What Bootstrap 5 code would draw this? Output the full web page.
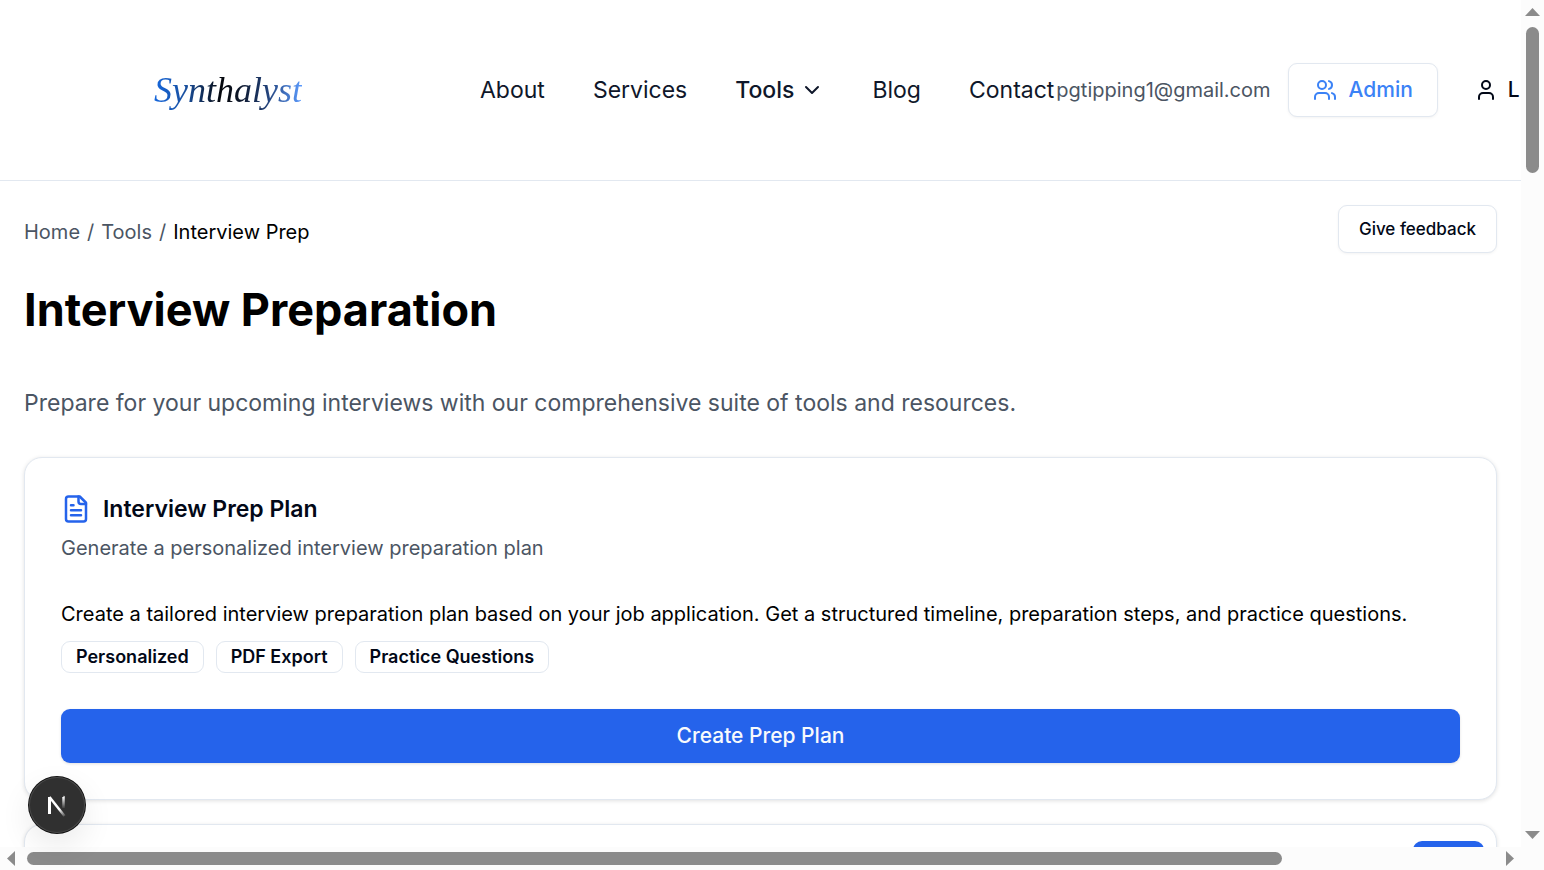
<!DOCTYPE html>
<html lang="en">
<head>
<meta charset="utf-8">
<meta name="viewport" content="width=device-width, initial-scale=1">
<title>Interview Preparation - Synthalyst</title>
<link href="https://cdn.jsdelivr.net/npm/bootstrap@5.3.0/dist/css/bootstrap.min.css" rel="stylesheet">
<style>
  :root { --ink: #020817; --nav-ink: #0f172a; --muted-ink: #4b5563; --line: #e2e8f0; --brand: #2563eb; --thumb: #8b8b8b; }
  body { font-family: Inter, "Liberation Sans", sans-serif; font-size: 20px; line-height: 30px; color: #000; background: #fff; }
  a { text-decoration: none; }
  svg { fill: none; stroke: currentColor; stroke-width: 2; stroke-linecap: round; stroke-linejoin: round; flex: none; }
  .frame { display: grid; grid-template: minmax(0, 1fr) 23px / minmax(0, 1fr) 23px; }

  .site-header { height: 181px; border-bottom: 1px solid var(--line); white-space: nowrap; }
  .brand-cell { width: 480px; padding-left: 154px; flex: none; }
  .brand { font: italic 36px/60px "Z003", "URW Chancery L", "Liberation Serif", serif; color: transparent; background: linear-gradient(90deg, #1567dd 0%, #1a4f9c 22%, #05070c 45%, #0b1220 55%, #1f3c70 75%, #5b9bff 100%); -webkit-background-clip: text; background-clip: text; }
  .site-nav { gap: 48px; font-size: 23px; flex: none; padding-right: 2px; }
  .site-nav a, .site-nav button { color: var(--nav-ink); }
  .tools-btn { font-weight: 500; gap: 6px; }
  .email { color: var(--muted-ink); margin-right: 17px; }
  .ui-btn { height: 54px; border: 1px solid var(--line); border-radius: 9px; padding: 0 24px; gap: 12px; font-size: 21px; font-weight: 500; background: #fff; box-shadow: 0 1px 3px rgba(0,0,0,.05); flex: none; }
  .ui-btn.admin { color: #3b82f6; }
  .ui-btn.plain { border-color: transparent; box-shadow: none; color: var(--ink); margin-left: 11px; gap: 10px; }
  .ui-btn.feedback { height: 48px; padding: 0 20px; font-size: 17px; color: var(--ink); }

  .crumbs { gap: 7px; color: var(--muted-ink); margin-bottom: 6px; }
  .crumbs a { color: var(--muted-ink); }
  .page-title { font-size: 45px; line-height: 54px; font-weight: 700; margin: 30px 0 48px; }
  .intro { font-size: 23px; line-height: 36px; color: var(--muted-ink); margin-bottom: 36px; }
  .tool-card { border: 1px solid var(--line); border-radius: 18px; padding: 36px; margin-bottom: 24px; background: #fff; box-shadow: 0 1px 4px rgba(0,0,0,.12); }
  .tool-card.next { padding: 16px 12px; height: 200px; }
  .tool-title { font-size: 23px; line-height: 30px; font-weight: 600; color: var(--ink); gap: 12px; margin-bottom: 9px; }
  .tool-title svg { color: var(--brand); }
  .tool-sub { color: var(--muted-ink); margin-bottom: 36px; }
  .tags { gap: 12px; margin: 12px 0 36px; }
  .tag { height: 32px; border: 1px solid var(--line); border-radius: 9px; padding: 0 14px; font-size: 18px; font-weight: 600; color: var(--ink); }
  .cta { height: 54px; border: 0; border-radius: 9px; background: var(--brand); color: #f8fafc; font-size: 21px; font-weight: 500; box-shadow: 0 1px 3px rgba(0,0,0,.12); }
  .pill { width: 71px; height: 30px; background: var(--brand); border-radius: 9px; }

  .scroll { background: #fcfcfc; }
  .scroll svg { fill: var(--thumb); stroke: none; }
  .scroll-y { padding: 8px 0; }
  .scroll-x { padding: 0 7px; }
  .scroll i { background: var(--thumb); border-radius: 7px; }
  .scroll-y i { width: 13px; height: 17.6%; margin-top: 11px; }
  .scroll-x i { height: 13px; width: 83.3%; margin-left: 12px; }

  .dev-badge { position: absolute; left: 29px; bottom: 37px; width: 56px; height: 56px; border: 0; border-radius: 50%; background: #303030; color: #fff; box-shadow: 0 0 0 1px #111, inset 0 0 0 1px #484848, 0 12px 32px rgba(0,0,0,.09); }
</style>
</head>
<body>
<div class="frame vh-100 position-relative overflow-hidden">
  <div class="overflow-hidden">
    <header class="site-header d-flex align-items-center">
      <div class="brand-cell"><a class="brand d-inline-block" href="#">Synthalyst</a></div>
      <nav class="site-nav d-flex align-items-center" aria-label="Main">
        <a href="#">About</a>
        <a href="#">Services</a>
        <button type="button" class="tools-btn border-0 bg-transparent p-0 d-flex align-items-center">Tools
          <svg width="24" height="24" viewBox="0 0 24 24" aria-hidden="true"><path d="m6 9 6 6 6-6"/></svg>
        </button>
        <a href="#">Blog</a>
        <a href="#">Contact</a>
      </nav>
      <span class="email">pgtipping1@gmail.com</span>
      <button type="button" class="ui-btn admin d-flex align-items-center">
        <svg width="24" height="24" viewBox="0 0 24 24" aria-hidden="true"><path d="M16 21v-2a4 4 0 0 0-4-4H6a4 4 0 0 0-4 4v2"/><circle cx="9" cy="7" r="4"/><path d="M22 21v-2a4 4 0 0 0-3-3.87M16 3.13a4 4 0 0 1 0 7.75"/></svg>
        Admin
      </button>
      <button type="button" class="ui-btn plain d-flex align-items-center" aria-label="Logout">
        <svg width="24" height="24" viewBox="0 0 24 24" aria-hidden="true"><path d="M19 21v-2a4 4 0 0 0-4-4H9a4 4 0 0 0-4 4v2"/><circle cx="12" cy="7" r="4"/></svg>
        L
      </button>
    </header>

    <main class="p-4">
      <div class="d-flex justify-content-between align-items-end">
        <nav class="crumbs d-flex" aria-label="Breadcrumb">
          <a href="#">Home</a><span>/</span><a href="#">Tools</a><span>/</span><span class="text-black">Interview Prep</span>
        </nav>
        <button type="button" class="ui-btn feedback">Give feedback</button>
      </div>
      <h1 class="page-title">Interview Preparation</h1>
      <p class="intro">Prepare for your upcoming interviews with our comprehensive suite of tools and resources.</p>

      <section class="tool-card">
        <h2 class="tool-title d-flex align-items-center">
          <svg width="30" height="30" viewBox="0 0 24 24" aria-hidden="true"><path d="M15 2H6a2 2 0 0 0-2 2v16a2 2 0 0 0 2 2h12a2 2 0 0 0 2-2V7Z"/><path d="M14 2v4a2 2 0 0 0 2 2h4M10 9H8M16 13H8M16 17H8"/></svg>
          Interview Prep Plan
        </h2>
        <p class="tool-sub">Generate a personalized interview preparation plan</p>
        <p class="mb-0">Create a tailored interview preparation plan based on your job application. Get a structured timeline, preparation steps, and practice questions.</p>
        <div class="tags d-flex">
          <span class="tag d-flex align-items-center">Personalized</span>
          <span class="tag d-flex align-items-center">PDF Export</span>
          <span class="tag d-flex align-items-center">Practice Questions</span>
        </div>
        <button type="button" class="cta w-100">Create Prep Plan</button>
      </section>

      <section class="tool-card next d-flex justify-content-end">
        <span class="pill"></span>
      </section>
    </main>
  </div>

  <div class="scroll scroll-y d-flex flex-column align-items-center" aria-hidden="true">
    <svg width="15" height="8" viewBox="0 0 15 8"><path d="M0 8 7.500 0 15 8Z"/></svg>
    <i></i>
    <svg class="mt-auto" width="15" height="8" viewBox="0 0 15 8"><path d="M0 0h15L7.500 8Z"/></svg>
  </div>
  <div class="scroll scroll-x d-flex align-items-center" aria-hidden="true">
    <svg width="8" height="15" viewBox="0 0 8 15"><path d="M8 0v15L0 7.500Z"/></svg>
    <i></i>
    <svg class="ms-auto" width="8" height="15" viewBox="0 0 8 15"><path d="M0 0v15l8-7.500Z"/></svg>
  </div>
  <div class="scroll"></div>

  <button type="button" class="dev-badge p-0 d-flex align-items-center justify-content-center" aria-label="Open developer tools">
    <svg width="22" height="24" viewBox="0 0 22 24" aria-hidden="true">
      <defs>
        <linearGradient id="fadeA" gradientUnits="userSpaceOnUse" x1="14" y1="16" x2="20" y2="24"><stop stop-color="#fff"/><stop offset="1" stop-color="#fff" stop-opacity="0"/></linearGradient>
        <linearGradient id="fadeB" gradientUnits="userSpaceOnUse" x1="17" y1="4" x2="17" y2="16"><stop stop-color="#fff"/><stop offset="1" stop-color="#fff" stop-opacity="0"/></linearGradient>
      </defs>
      <path d="M3.500 21V4" stroke-width="3" stroke-linecap="butt"/>
      <path d="M3.500 4l15 19" stroke="url(#fadeA)" stroke-width="2.500" stroke-linecap="butt"/>
      <path d="M17.500 4h.01v11" stroke="url(#fadeB)" stroke-width="2.500" stroke-linecap="butt"/>
    </svg>
  </button>
</div>
<script src="https://cdn.jsdelivr.net/npm/bootstrap@5.3.0/dist/js/bootstrap.bundle.min.js"></script>
</body>
</html>
